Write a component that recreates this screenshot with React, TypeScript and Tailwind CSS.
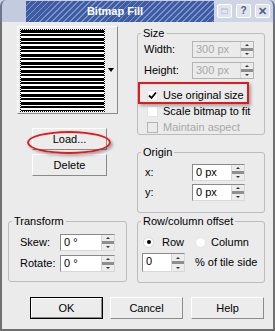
import React from "react";

function Spinner() {
  return (
    <div className="flex flex-col w-[13px] h-full bg-[#ececec] border-l border-[#d4d4d4]">
      <div className="flex-1 flex items-center justify-center">
        <div className="w-0 h-0 border-l-[2px] border-r-[2px] border-b-[2px] border-l-transparent border-r-transparent border-b-[#333]" />
      </div>
      <div className="h-[3px] bg-[#8e8e8e]" />
      <div className="flex-1 flex items-center justify-center">
        <div className="w-0 h-0 border-l-[2px] border-r-[2px] border-t-[2px] border-l-transparent border-r-transparent border-t-[#333]" />
      </div>
    </div>
  );
}

function SpinInput({ value, className, disabled }: { value: string; className: string; disabled?: boolean }) {
  return (
    <div
      className={
        "flex h-[17px] border " +
        (disabled
          ? "border-[#b4b4b4] bg-[#ebebeb] text-[#a8a8a8] "
          : "border-t-[#8a8a8a] border-l-[#8a8a8a] border-r-[#d8d8d8] border-b-[#d8d8d8] bg-white text-black ") +
        className
      }
    >
      <div className="flex-1 pl-[3px] leading-[15px]">{value}</div>
      <Spinner />
    </div>
  );
}

function Btn({ label, className }: { label: string; className: string }) {
  return (
    <div
      className={
        "flex items-center justify-center h-[22px] bg-[#ececec] border border-t-white border-l-white border-r-[#8a8a8a] border-b-[#8a8a8a] " +
        className
      }
    >
      {label}
    </div>
  );
}

function Check({ checked, disabled, label }: { checked?: boolean; disabled?: boolean; label: string }) {
  return (
    <div className="flex items-center h-[14px] ml-[9px]">
      <div
        className={
          "w-[11px] h-[11px] flex items-center justify-center border " +
          (disabled ? "border-[#b4b4b4] bg-[#ebebeb]" : "border-[#e4e4e4] bg-white")
        }
      >
        {checked && (
          <svg width="9" height="9" viewBox="0 0 9 9">
            <path d="M1 4.5 L3.5 7 L8 1.5" stroke="#000" strokeWidth="1.8" fill="none" />
          </svg>
        )}
      </div>
      <span className={"ml-[5px] " + (disabled ? "text-[#a8a8a8]" : "text-black")}>{label}</span>
    </div>
  );
}

function Group({ title, className, children }: { title: string; className: string; children: React.ReactNode }) {
  return (
    <fieldset className={"border border-[#bcbcbc] rounded-[3px] " + className}>
      <legend className="ml-[3px] px-[2px] text-[11px] leading-[12px]">{title}</legend>
      {children}
    </fieldset>
  );
}

export default function App() {
  return (
    <div className="w-[275px] h-[331px] flex flex-col font-['Liberation_Sans',Arial,sans-serif] text-[11px] text-black bg-white">
      {/* Title bar */}
      <div className="h-[22px] flex bg-[#c8d0e2]">
        <div className="w-[26px] bg-[#c2cbe0] rounded-tl-[6px] border-l-2 border-[#6b7590]" />
        <div className="flex-1 mt-[1px] flex items-center justify-center bg-[repeating-linear-gradient(135deg,#3f5ca2_0px,#3f5ca2_3px,#7b94cc_3px,#7b94cc_4.2px)]">
          <span className="text-white font-bold text-[11px] ml-[-10px]">Bitmap Fill</span>
        </div>
        <div className="w-[61px] flex items-start pt-[4px] pl-[3px] gap-[4px] bg-[#cfd5e4] rounded-tr-[6px] border-r-2 border-[#6b7590]">
          <div className="w-[15px] h-[14px] rounded-[2px] border border-white bg-[#dfe4ef] flex items-center justify-center">
            <div className="w-[7px] h-[6px] border border-t-2 border-[#c4cadb]" />
          </div>
          <div className="w-[15px] h-[14px] rounded-[2px] border border-white bg-[#dfe4ef] flex items-center justify-center text-[#53617f] font-bold text-[10px] leading-none">
            ?
          </div>
          <div className="w-[15px] h-[14px] rounded-[2px] border border-white bg-[#dfe4ef] flex items-center justify-center text-[#53617f] font-bold text-[11px] leading-none">
            ✕
          </div>
        </div>
      </div>

      {/* Body */}
      <div className="relative flex-1 flex flex-col bg-[#ebebeb] border-l-2 border-r-2 border-b-2 border-[#707070]">
        <div className="flex items-start">
          {/* Left column */}
          <div className="ml-[6px] w-[119px] flex flex-col">
            <div className="ml-[9px] mt-[4px] w-[101px] h-[88px] flex border border-t-white border-l-white border-r-[#8a8a8a] border-b-[#8a8a8a] bg-[#ececec]">
              <div className="ml-[2px] mt-[2px] w-[85px] h-[83px] border border-dotted border-black bg-white">
                <div className="w-full h-full bg-[repeating-linear-gradient(180deg,#000_0px,#000_3px,#fff_3px,#fff_4px,#000_4px,#000_6px,#fff_6px,#fff_8px)]" />
              </div>
              <div className="flex-1 flex items-center justify-center">
                <div className="w-0 h-0 border-l-[3.5px] border-r-[3.5px] border-t-[4px] border-l-transparent border-r-transparent border-t-black" />
              </div>
            </div>
            <Btn label="Load..." className="ml-[24px] mt-[14px] w-[75px]" />
            <Btn label="Delete" className="ml-[24px] mt-[4px] w-[75px]" />
            <Group title="Transform" className="mt-[39px] h-[67px] w-[119px]">
              <div className="flex items-center mt-[7px]">
                <span className="w-[51px] pl-[11px]">Skew:</span>
                <SpinInput value="0 °" className="w-[55px]" />
              </div>
              <div className="flex items-center mt-[4px]">
                <span className="w-[51px] pl-[11px]">Rotate:</span>
                <SpinInput value="0 °" className="w-[55px]" />
              </div>
            </Group>
          </div>

          {/* Right column */}
          <div className="ml-[10px] w-[128px] flex flex-col">
            <Group title="Size" className="mt-[5px] h-[108px]">
              <div className="flex items-center mt-[2px]">
                <span className="w-[54px] pl-[6px]">Width:</span>
                <SpinInput value="300 px" className="w-[62px]" disabled />
              </div>
              <div className="flex items-center mt-[4px]">
                <span className="w-[54px] pl-[6px]">Height:</span>
                <SpinInput value="300 px" className="w-[62px]" disabled />
              </div>
              <div className="mt-[9px]">
                <Check checked label="Use original size" />
              </div>
              <div className="mt-[2px]">
                <Check label="Scale bitmap to fit" />
              </div>
              <div className="mt-[2px]">
                <Check disabled label="Maintain aspect" />
              </div>
            </Group>
            <Group title="Origin" className="mt-[11px] h-[67px]">
              <div className="flex items-center mt-[6px]">
                <span className="w-[54px] pl-[7px]">x:</span>
                <SpinInput value="0 px" className="w-[53px]" />
              </div>
              <div className="flex items-center mt-[3px]">
                <span className="w-[54px] pl-[7px]">y:</span>
                <SpinInput value="0 px" className="w-[53px]" />
              </div>
            </Group>
            <Group title="Row/column offset" className="mt-[2px] h-[68px]">
              <div className="flex items-center mt-[9px] h-[12px] ml-[5px]">
                <div className="w-[11px] h-[11px] rounded-full bg-white border border-[#d8d8d8] flex items-center justify-center">
                  <div className="w-[4px] h-[4px] rounded-full bg-black" />
                </div>
                <span className="ml-[8px]">Row</span>
                <div className="ml-[11px] w-[11px] h-[11px] rounded-full bg-white border border-[#e4e4e4]" />
                <span className="ml-[5px]">Column</span>
              </div>
              <div className="flex items-center mt-[5px] ml-[4px]">
                <SpinInput value="0" className="w-[43px] h-[19px]" />
                <span className="ml-[10px]">% of tile side</span>
              </div>
            </Group>
          </div>
        </div>

        {/* Bottom buttons */}
        <div className="flex mt-[14px]">
          <div className="ml-[28px] w-[73px] h-[22px] border border-black">
            <Btn label="OK" className="w-full h-full" />
          </div>
          <Btn label="Cancel" className="ml-[7px] w-[73px]" />
          <Btn label="Help" className="ml-[8px] w-[73px]" />
        </div>

        {/* Red annotations */}
        <div className="absolute left-[136px] top-[60px] w-[111px] h-[22px] border-2 border-[#e11b1b] shadow-[2px_2px_3px_rgba(0,0,0,0.3)]" />
        <div className="absolute left-[25px] top-[109px] w-[84px] h-[23px] rounded-[50%] border-2 border-[#e11b1b] shadow-[2px_2px_3px_rgba(0,0,0,0.3)]" />
      </div>
    </div>
  );
}
